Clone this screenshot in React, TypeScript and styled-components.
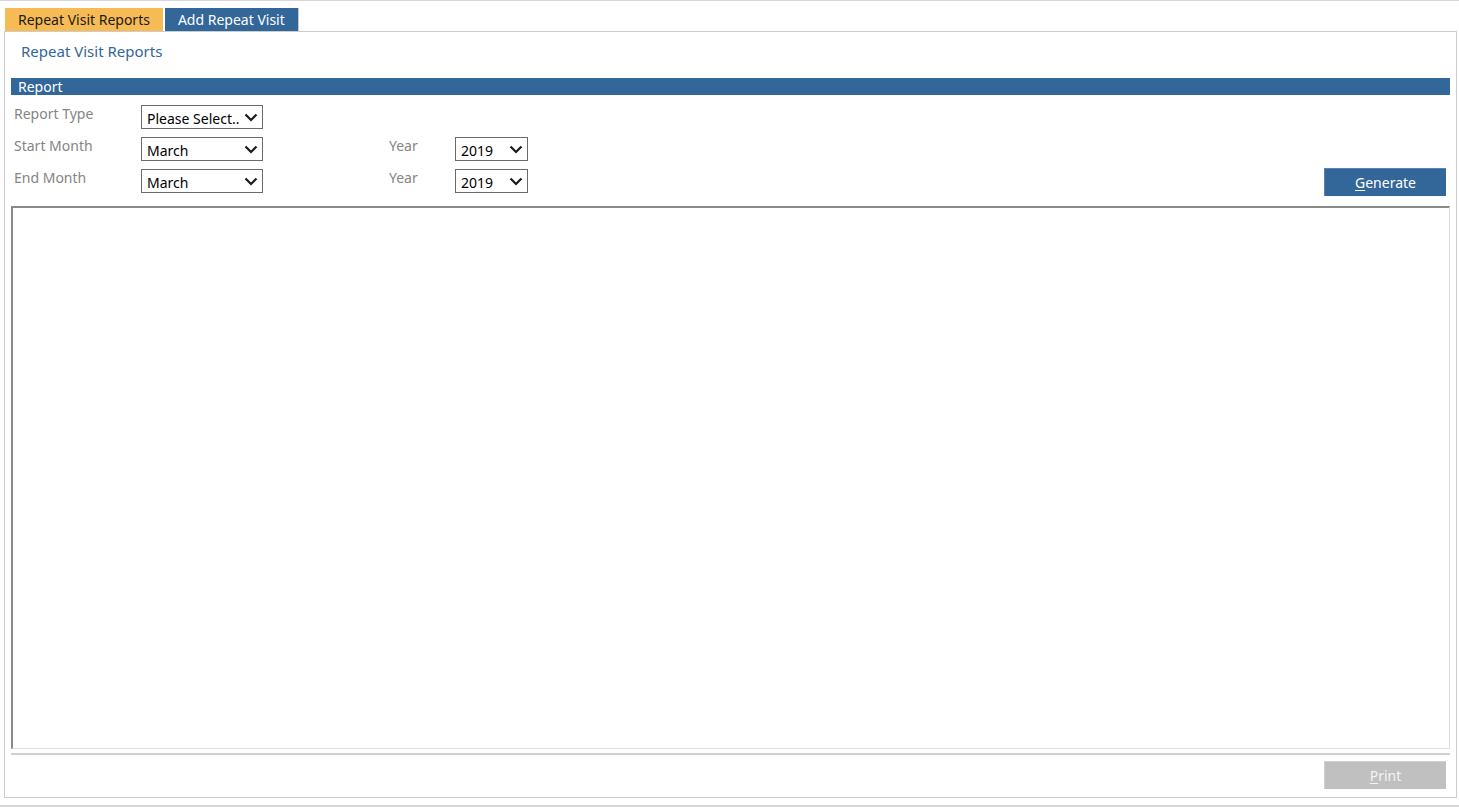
import React from "react";
import styled, { createGlobalStyle } from "styled-components";

const GlobalStyle = createGlobalStyle`
    html, body {
        margin: 0px;
        padding: 0px;
        background-color: white;
    }
    body {
        font-family: "Noto Sans", "Open Sans", sans-serif;
        font-size: 14px;
    }
    * {
        box-sizing: border-box;
    }
`;

const Page = styled.div`
    width: 1459px;
    height: 807px;
    padding: 7px 2px 7px 4px;
    display: flex;
    flex-direction: column;
    border-top: 1px solid #d6d6d6;
    border-bottom: 2px solid #d6d6d6;
`;

const TabRow = styled.div`
    height: 23px;
    padding-left: 1px;
    display: flex;
    align-items: stretch;
    gap: 2px;
`;

const Tab = styled.div<{ $active?: boolean }>`
    padding: 0px 13px;
    display: flex;
    align-items: center;
    font-size: 14px;
    color: ${(p) => (p.$active ? "#1a1a1a" : "white")};
    background-color: ${(p) => (p.$active ? "#f7bb55" : "#336699")};
    border-right: ${(p) => (p.$active ? "none" : "1px solid #c8c8c8")};
`;

const Panel = styled.div`
    flex: 1;
    padding: 0px 6px 8px 6px;
    display: flex;
    flex-direction: column;
    border: 1px solid #cccccc;
`;

const Title = styled.div`
    height: 46px;
    padding: 9px 0px 0px 10px;
    font-size: 15px;
    color: #336699;
`;

const SectionBar = styled.div`
    height: 17px;
    padding-left: 7px;
    display: flex;
    align-items: center;
    font-size: 14px;
    color: white;
    background-color: #336699;
`;

const Form = styled.div`
    padding: 10px 4px 13px 3px;
    display: flex;
    flex-direction: column;
    gap: 8px;
`;

const Row = styled.div`
    height: 24px;
    display: flex;
    align-items: center;
`;

const Label = styled.span<{ $width: number }>`
    width: ${(p) => p.$width}px;
    margin-top: -8px;
    flex-shrink: 0;
    font-size: 14px;
    color: #858585;
`;

const SelectBox = styled.div<{ $width: number }>`
    width: ${(p) => p.$width}px;
    height: 24px;
    padding: 2px 4px 0px 5px;
    display: flex;
    align-items: center;
    justify-content: space-between;
    flex-shrink: 0;
    font-size: 14px;
    color: black;
    border: 1px solid #6a6a6a;
    background-color: white;
    svg {
        margin-top: -2px;
    }
`;

const Spacer = styled.div<{ $width: number }>`
    width: ${(p) => p.$width}px;
    flex-shrink: 0;
`;

const Button = styled.button<{ $disabled?: boolean; $offset?: number }>`
    width: 122px;
    height: 28px;
    margin-left: auto;
    margin-top: ${(p) => p.$offset ?? 0}px;
    padding: 0px;
    font-family: inherit;
    font-size: 14px;
    color: ${(p) => (p.$disabled ? "#f4f4f4" : "white")};
    background-color: ${(p) => (p.$disabled ? "#c0c0c0" : "#336699")};
    border: none;
    border-top: 1px solid ${(p) => (p.$disabled ? "#d0d0d0" : "#5a83ad")};
    border-left: 1px solid ${(p) => (p.$disabled ? "#d0d0d0" : "#5a83ad")};
    u {
        text-decoration-thickness: 1px;
        text-underline-offset: 2px;
    }
`;

const ReportFrame = styled.div`
    flex: 1;
    background-color: white;
    border-top: 2px solid #8a8a8a;
    border-left: 2px solid #8a8a8a;
    border-right: 1px solid #dedede;
    border-bottom: 1px solid #dedede;
`;

const Divider = styled.div`
    height: 2px;
    margin-top: 4px;
    background-color: #cfcfcf;
`;

const Footer = styled.div`
    padding: 6px 4px 0px 0px;
    display: flex;
`;

const Chevron: React.FC = () => (
    <svg width="14" height="9" viewBox="0 0 14 9">
        <polyline
            points="1.5,1.5 7,7 12.5,1.5"
            fill="none"
            stroke="#1a1a1a"
            strokeWidth="2.2"
        />
    </svg>
);

const Select: React.FC<{ value: string; width: number }> = ({ value, width }) => (
    <SelectBox $width={width}>
        <span>{value}</span>
        <Chevron />
    </SelectBox>
);

const App: React.FC = () => {
    return (
        <Page>
            <GlobalStyle />
            <TabRow>
                <Tab $active>Repeat Visit Reports</Tab>
                <Tab>Add Repeat Visit</Tab>
            </TabRow>
            <Panel>
                <Title>Repeat Visit Reports</Title>
                <SectionBar>Report</SectionBar>
                <Form>
                    <Row>
                        <Label $width={127}>Report Type</Label>
                        <Select value="Please Select.." width={122} />
                    </Row>
                    <Row>
                        <Label $width={127}>Start Month</Label>
                        <Select value="March" width={122} />
                        <Spacer $width={126} />
                        <Label $width={66}>Year</Label>
                        <Select value="2019" width={73} />
                    </Row>
                    <Row>
                        <Label $width={127}>End Month</Label>
                        <Select value="March" width={122} />
                        <Spacer $width={126} />
                        <Label $width={66}>Year</Label>
                        <Select value="2019" width={73} />
                        <Button $offset={2}>
                            <u>G</u>enerate
                        </Button>
                    </Row>
                </Form>
                <ReportFrame />
                <Divider />
                <Footer>
                    <Button $disabled>
                        <u>P</u>rint
                    </Button>
                </Footer>
            </Panel>
        </Page>
    );
};

export default App;
